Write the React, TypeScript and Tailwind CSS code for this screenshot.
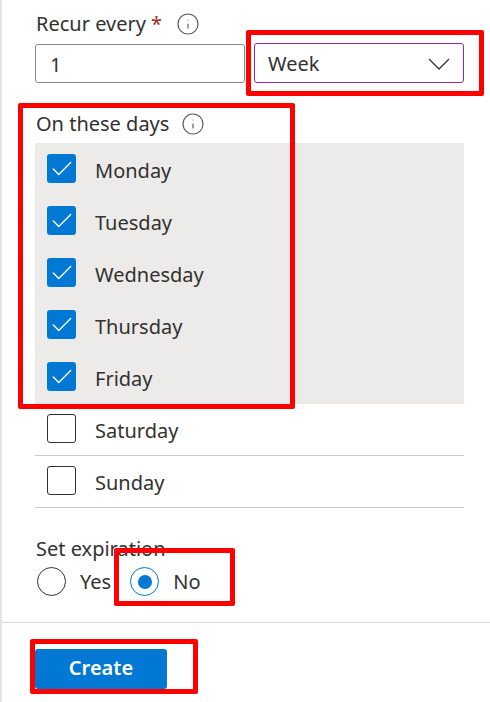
import { Check, Info } from 'lucide-react';

const days = ['Monday', 'Tuesday', 'Wednesday', 'Thursday', 'Friday', 'Saturday', 'Sunday'];

const DayRow = ({ day, selected }: { day: string; selected: boolean }) => (
    <div className={`flex h-[52px] items-start pl-3 ${selected ? 'pt-[11px]' : 'border-b border-[#cccccc] pt-[10px]'}`}>
        {selected ? (
            <span className="flex h-[29px] w-[29px] items-center justify-center rounded-[3px] bg-[#0078d4]">
                <Check className="h-[26px] w-[26px] text-white" strokeWidth={1.3} />
            </span>
        ) : (
            <span className="h-[29px] w-[29px] rounded-[3px] border border-[#323130]" />
        )}
        <span className="ml-[19px] mt-[2px] text-[20px] leading-[29px] text-[#323130]">{day}</span>
    </div>
);

const RedBox = ({ className }: { className: string }) => (
    <div className={`pointer-events-none absolute rounded-[2px] border-[5px] border-[#ff0000] ${className}`} />
);

export default function App() {
    return (
        <div className="relative h-[702px] w-[490px] overflow-hidden border-l-2 border-[#e3e3e3] bg-white font-['Noto_Sans',sans-serif]">
            <div className="pl-[33px] pr-[26px]">
                <div className="flex h-[44px] items-center pl-px pt-[3px] text-[20px] text-[#323130]">
                    Recur every
                    <span className="ml-[5px] text-[#a4262c]">*</span>
                    <Info className="ml-[14px] h-[24px] w-[24px] text-[#605e5c]" strokeWidth={1.2} />
                </div>
                <div className="flex gap-[9px]">
                    <div className="flex h-[39px] w-[210px] items-center rounded-[3px] border border-[#8a8886] pl-[14px] pt-[2px] text-[20px] text-[#323130]">
                        1
                    </div>
                    <div className="-mt-px flex h-[40px] w-[210px] items-center justify-between rounded-[3px] border border-[#8a2da5] pl-[13px] pr-[13px] pt-[2px] text-[20px] text-[#323130]">
                        Week
                        <svg className="h-[12px] w-[22px]" viewBox="0 0 22 12" fill="none" stroke="#323130" strokeWidth={1.3}>
                            <polyline points="1,1 11,11 21,1" />
                        </svg>
                    </div>
                </div>
                <div className="mt-[24px] flex h-[36px] items-center pb-[2px] pl-px text-[20px] text-[#323130]">
                    On these days
                    <Info className="ml-[12px] h-[24px] w-[24px] text-[#605e5c]" strokeWidth={1.2} />
                </div>
                <div className="bg-[#edebe9] pb-px">
                    {days.slice(0, 5).map((day) => (
                        <DayRow key={day} day={day} selected />
                    ))}
                </div>
                <div>
                    {days.slice(5).map((day) => (
                        <DayRow key={day} day={day} selected={false} />
                    ))}
                </div>
                <div className="mt-[26px] pl-px text-[20px] leading-[30px] text-[#323130]">Set expiration</div>
                <div className="mt-[3px] flex h-[29px] items-center pl-[2px] text-[20px] text-[#323130]">
                    <span className="h-[29px] w-[29px] rounded-full border border-[#323130]" />
                    <span className="ml-[14px]">Yes</span>
                    <span className="ml-[19px] flex h-[29px] w-[29px] items-center justify-center rounded-full border border-[#0078d4]">
                        <span className="h-[14px] w-[14px] rounded-full bg-[#0078d4]" />
                    </span>
                    <span className="ml-[14px]">No</span>
                </div>
            </div>
            <div className="mt-[26px] border-t border-[#d6d6d6] pl-[33px] pt-[26px]">
                <button className="h-[40px] w-[132px] rounded-[3px] bg-[#0078d4] pb-[2px] text-[20px] font-semibold text-white">
                    Create
                </button>
            </div>

            {/* bits of the page behind the panel, showing in the left edge */}
            <div className="absolute -left-[2px] top-[116px] h-px w-[2px] bg-[#c8c8c8]" />
            <div className="absolute -left-[2px] top-[169px] h-[2px] w-[2px] bg-[#333333]" />
            <div className="absolute -left-[2px] top-[191px] h-px w-[2px] bg-[#c8c8c8]" />

            <RedBox className="left-[244px] top-[30px] h-[66px] w-[238px]" />
            <RedBox className="left-[16px] top-[103px] h-[306px] w-[277px]" />
            <RedBox className="left-[112px] top-[548px] h-[58px] w-[121px]" />
            <RedBox className="left-[28px] top-[639px] h-[55px] w-[168px]" />
        </div>
    );
}
